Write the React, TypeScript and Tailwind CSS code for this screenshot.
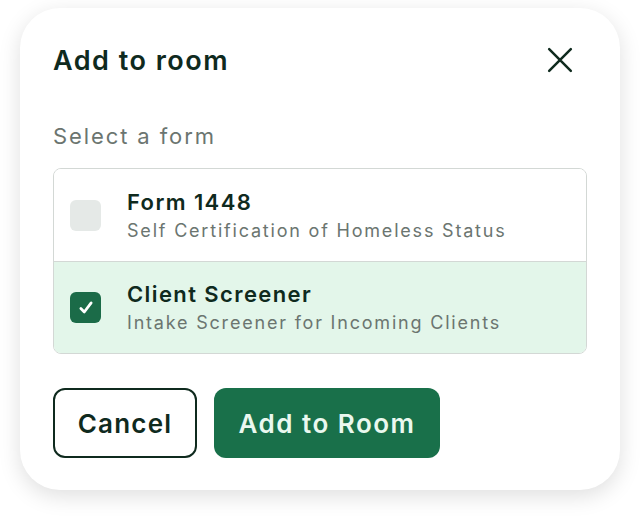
import { useState } from "react";

const forms = [
  { id: 1, title: "Form 1448", subtitle: "Self Certification of Homeless Status" },
  { id: 2, title: "Client Screener", subtitle: "Intake Screener for Incoming Clients" },
];

export default function App() {
  const [selected, setSelected] = useState<number>(2);

  return (
    <main
      className="min-h-screen bg-white px-5 pt-2"
      style={{ fontFamily: "Inter, 'Noto Sans', sans-serif" }}
    >
      <div className="w-[600px] rounded-[40px] bg-white px-[33px] pt-9 pb-8 shadow-[0_6px_22px_rgba(0,0,0,0.13)]">
        {/* header */}
        <div className="flex h-8 items-center justify-between">
          <h2 className="text-[27px] font-semibold leading-none tracking-[1.5px] text-[#0f2a1e]">
            Add to room
          </h2>
          <button className="mr-[14px] text-[#0f2a1e]">
            <svg width="26" height="26" viewBox="0 0 24 24" fill="none" stroke="currentColor" strokeWidth="2.3" strokeLinecap="round">
              <path d="M2 2L22 22M22 2L2 22" />
            </svg>
          </button>
        </div>

        <p className="mt-[46px] text-[22px] leading-7 tracking-[1.9px] text-[#6b7570]">Select a form</p>

        {/* list */}
        <div className="mt-[18px] overflow-hidden rounded-lg border border-[#d3d8d5]">
          {forms.map((form, i) => {
            const checked = selected === form.id;
            return (
              <div
                key={form.id}
                onClick={() => setSelected(form.id)}
                className={`flex h-[92px] cursor-pointer items-center gap-[26px] pl-[16px] ${
                  i > 0 ? "border-t border-[#d3d8d5]" : ""
                } ${checked ? "bg-[#e3f6ea]" : "bg-white"}`}
              >
                <div
                  className={`flex h-[31px] w-[31px] shrink-0 items-center justify-center rounded-md ${
                    checked ? "bg-[#1b6b48]" : "bg-[#e5e9e7]"
                  }`}
                >
                  {checked && (
                    <svg width="16" height="16" viewBox="0 0 14 14" fill="none" stroke="white" strokeWidth="2.4" strokeLinecap="round" strokeLinejoin="round">
                      <path d="M2.5 7.5L5.5 10.5L11.5 2.5" />
                    </svg>
                  )}
                </div>
                <div className="flex flex-col gap-[3px]">
                  <span className="text-[22px] font-semibold leading-7 tracking-[1.4px] text-[#0f2a1e]">{form.title}</span>
                  <span className="text-[18px] leading-6 tracking-[1.8px] text-[#6b7570]">{form.subtitle}</span>
                </div>
              </div>
            );
          })}
        </div>

        {/* actions */}
        <div className="mt-[34px] flex gap-[17px]">
          <button className="h-[70px] w-[144px] rounded-xl border-2 border-[#0f2a1e] text-[26px] font-semibold tracking-[1.2px] text-[#0f2a1e]">
            Cancel
          </button>
          <button className="h-[70px] w-[226px] rounded-xl bg-[#19704a] text-[26px] font-semibold tracking-[1.5px] text-[#eaf8ef]">
            Add to Room
          </button>
        </div>
      </div>
    </main>
  );
}
